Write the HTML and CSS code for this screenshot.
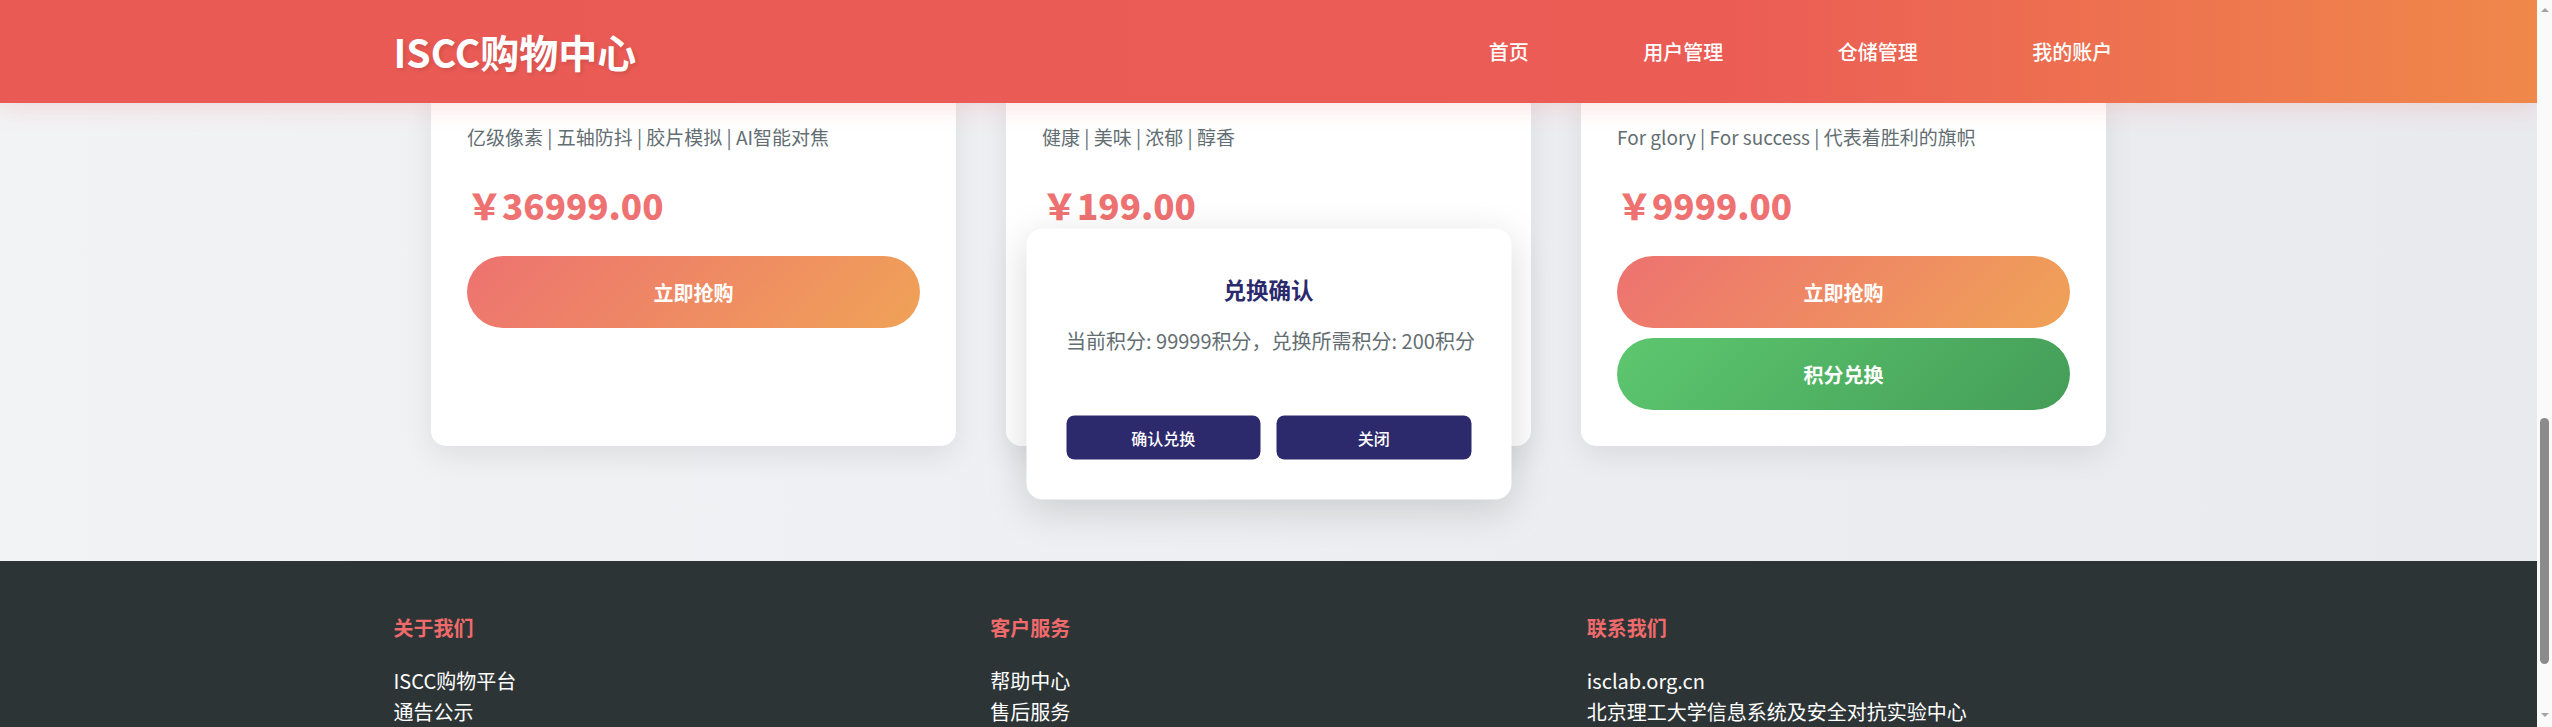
FILE: index.html
```html
<!DOCTYPE html>
<html lang="zh-CN">
<head>
<meta charset="utf-8">
<title>ISCC购物中心</title>
<link rel="stylesheet" href="styles.css">
</head>
<body>
<div class="window">
  <div class="viewport">
    <header class="header">
      <div class="container header-inner">
        <div class="logo">ISCC购物中心</div>
        <nav class="nav">
          <a href="#">首页</a>
          <a href="#">用户管理</a>
          <a href="#">仓储管理</a>
          <a href="#">我的账户</a>
        </nav>
      </div>
    </header>

    <main class="main">
      <div class="container">
        <div class="products">
          <div class="card">
            <p class="card-desc">亿级像素 | 五轴防抖 | 胶片模拟 | AI智能对焦</p>
            <div class="price">￥36999.00</div>
            <div class="actions">
              <button class="btn btn-buy">立即抢购</button>
            </div>
          </div>
          <div class="card">
            <p class="card-desc">健康 | 美味 | 浓郁 | 醇香</p>
            <div class="price">￥199.00</div>
          </div>
          <div class="card">
            <p class="card-desc">For glory | For success | 代表着胜利的旗帜</p>
            <div class="price">￥9999.00</div>
            <div class="actions">
              <button class="btn btn-buy">立即抢购</button>
              <button class="btn btn-exchange">积分兑换</button>
            </div>
          </div>
        </div>
      </div>
    </main>

    <footer class="footer">
      <div class="container footer-grid">
        <div class="footer-col">
          <h4>关于我们</h4>
          <ul>
            <li>ISCC购物平台</li>
            <li>通告公示</li>
          </ul>
        </div>
        <div class="footer-col">
          <h4>客户服务</h4>
          <ul>
            <li>帮助中心</li>
            <li>售后服务</li>
          </ul>
        </div>
        <div class="footer-col">
          <h4>联系我们</h4>
          <ul>
            <li>isclab.org.cn</li>
            <li>北京理工大学信息系统及安全对抗实验中心</li>
          </ul>
        </div>
      </div>
    </footer>

    <div class="modal">
      <h3 class="modal-title">兑换确认</h3>
      <p class="modal-text">当前积分: 99999积分，兑换所需积分: 200积分</p>
      <div class="modal-actions">
        <button class="modal-btn">确认兑换</button>
        <button class="modal-btn">关闭</button>
      </div>
    </div>
  </div>

  <div class="scrollbar">
    <span class="sb-arrow sb-up"></span>
    <div class="sb-track"><div class="sb-thumb"></div></div>
    <span class="sb-arrow sb-down"></span>
  </div>
</div>
</body>
</html>
```

FILE: styles.css
```css
* {
  box-sizing: border-box;
  margin: 0;
  padding: 0;
}

html,
body {
  width: 100%;
  height: 100%;
  overflow: hidden;
}

body {
  font-family: "Noto Sans CJK SC", "Noto Sans", sans-serif;
  background: #ffffff;
}

.window {
  display: flex;
  height: 727px;
}

.viewport {
  position: relative;
  flex: 1;
  overflow: hidden;
  background: linear-gradient(90deg, #f2f3f5 0%, #e9eaee 100%);
}

.container {
  max-width: 1750px;
  margin: 0 auto;
}

/* Header (fixed, overlays scrolled content) */
.header {
  position: absolute;
  top: 0;
  left: 0;
  right: 0;
  height: 103px;
  background: linear-gradient(90deg, #ea5a55 0%, #eb5c55 68%, #f0884a 100%);
  box-shadow: 0 4px 24px rgba(234, 90, 85, 0.18);
  z-index: 10;
}

.header-inner {
  height: 100%;
  display: flex;
  align-items: center;
  justify-content: space-between;
}

.logo {
  color: #ffffff;
  font-size: 39px;
  font-weight: 700;
  line-height: 1;
  text-shadow: 2px 2px 4px rgba(0, 0, 0, 0.12);
}

.nav {
  display: flex;
  gap: 52px;
}

.nav a {
  color: #ffffff;
  text-decoration: none;
  font-size: 20px;
  font-weight: 500;
  padding: 0 31.25px;
}

/* Products */
.main {
  padding: 86px 0 115px;
}

.products {
  display: grid;
  grid-template-columns: repeat(3, 1fr);
  gap: 50px;
  padding: 0 37.5px;
}

.card {
  background: #ffffff;
  border-radius: 15px;
  padding: 36px;
  box-shadow: 0 10px 30px rgba(0, 0, 0, 0.08);
  display: flex;
  flex-direction: column;
}

.card-desc {
  font-size: 19px;
  line-height: 30px;
  color: #636e72;
}

.price {
  margin-top: 32px;
  font-size: 35px;
  font-weight: 900;
  line-height: 42px;
  color: #ef7272;
}

.actions {
  margin-top: 30px;
  display: flex;
  flex-direction: column;
  gap: 10px;
}

.btn {
  height: 72px;
  border: none;
  border-radius: 36px;
  color: #ffffff;
  font-family: inherit;
  font-size: 20px;
  font-weight: 700;
}

.btn-buy {
  background: linear-gradient(135deg, #ed7270 0%, #f0a257 100%);
}

.btn-exchange {
  background: linear-gradient(135deg, #5dc76f 0%, #449d58 100%);
}

/* Footer */
.footer {
  background: #2d3436;
  padding: 52px 0 40px;
}

.footer-grid {
  display: grid;
  grid-template-columns: repeat(3, 1fr);
  gap: 40px;
}

.footer-col h4 {
  color: #ef6b6b;
  font-size: 20px;
  font-weight: 700;
  line-height: 30px;
  margin-bottom: 22px;
}

.footer-col ul {
  list-style: none;
}

.footer-col li {
  color: #ffffff;
  font-size: 20px;
  line-height: 31px;
}

/* Modal */
.modal {
  position: absolute;
  top: 50%;
  left: 50%;
  transform: translate(-50%, -50%);
  width: 485px;
  padding: 40px;
  background: #ffffff;
  border-radius: 16px;
  box-shadow: 0 10px 40px rgba(0, 0, 0, 0.15);
  text-align: center;
  z-index: 20;
}

.modal-title {
  font-size: 22.5px;
  line-height: 40px;
  font-weight: 700;
  color: #2a2a6c;
}

.modal-text {
  margin-top: 17px;
  font-size: 20px;
  line-height: 30px;
  color: #636e72;
  white-space: nowrap;
}

.modal-actions {
  margin-top: 60px;
  display: flex;
  gap: 16px;
}

.modal-btn {
  flex: 1;
  height: 44px;
  border: none;
  border-radius: 8px;
  background: #2c2a6d;
  color: #ffffff;
  font-family: inherit;
  font-size: 16px;
  font-weight: 500;
}

/* Scrollbar */
.scrollbar {
  width: 15px;
  background: #fafafa;
  display: flex;
  flex-direction: column;
  align-items: center;
}

.sb-arrow {
  display: block;
  width: 0;
  height: 0;
  border-left: 4px solid transparent;
  border-right: 4px solid transparent;
}

.sb-up {
  margin-top: 8px;
  border-bottom: 4px solid #a3a3a3;
}

.sb-down {
  margin-bottom: 10px;
  border-top: 4px solid #a3a3a3;
}

.sb-track {
  flex: 1;
  width: 100%;
  padding-top: 406px;
}

.sb-thumb {
  width: 9px;
  height: 246px;
  margin: 0 auto;
  background: #8b8b8b;
  border-radius: 5px;
}
```
